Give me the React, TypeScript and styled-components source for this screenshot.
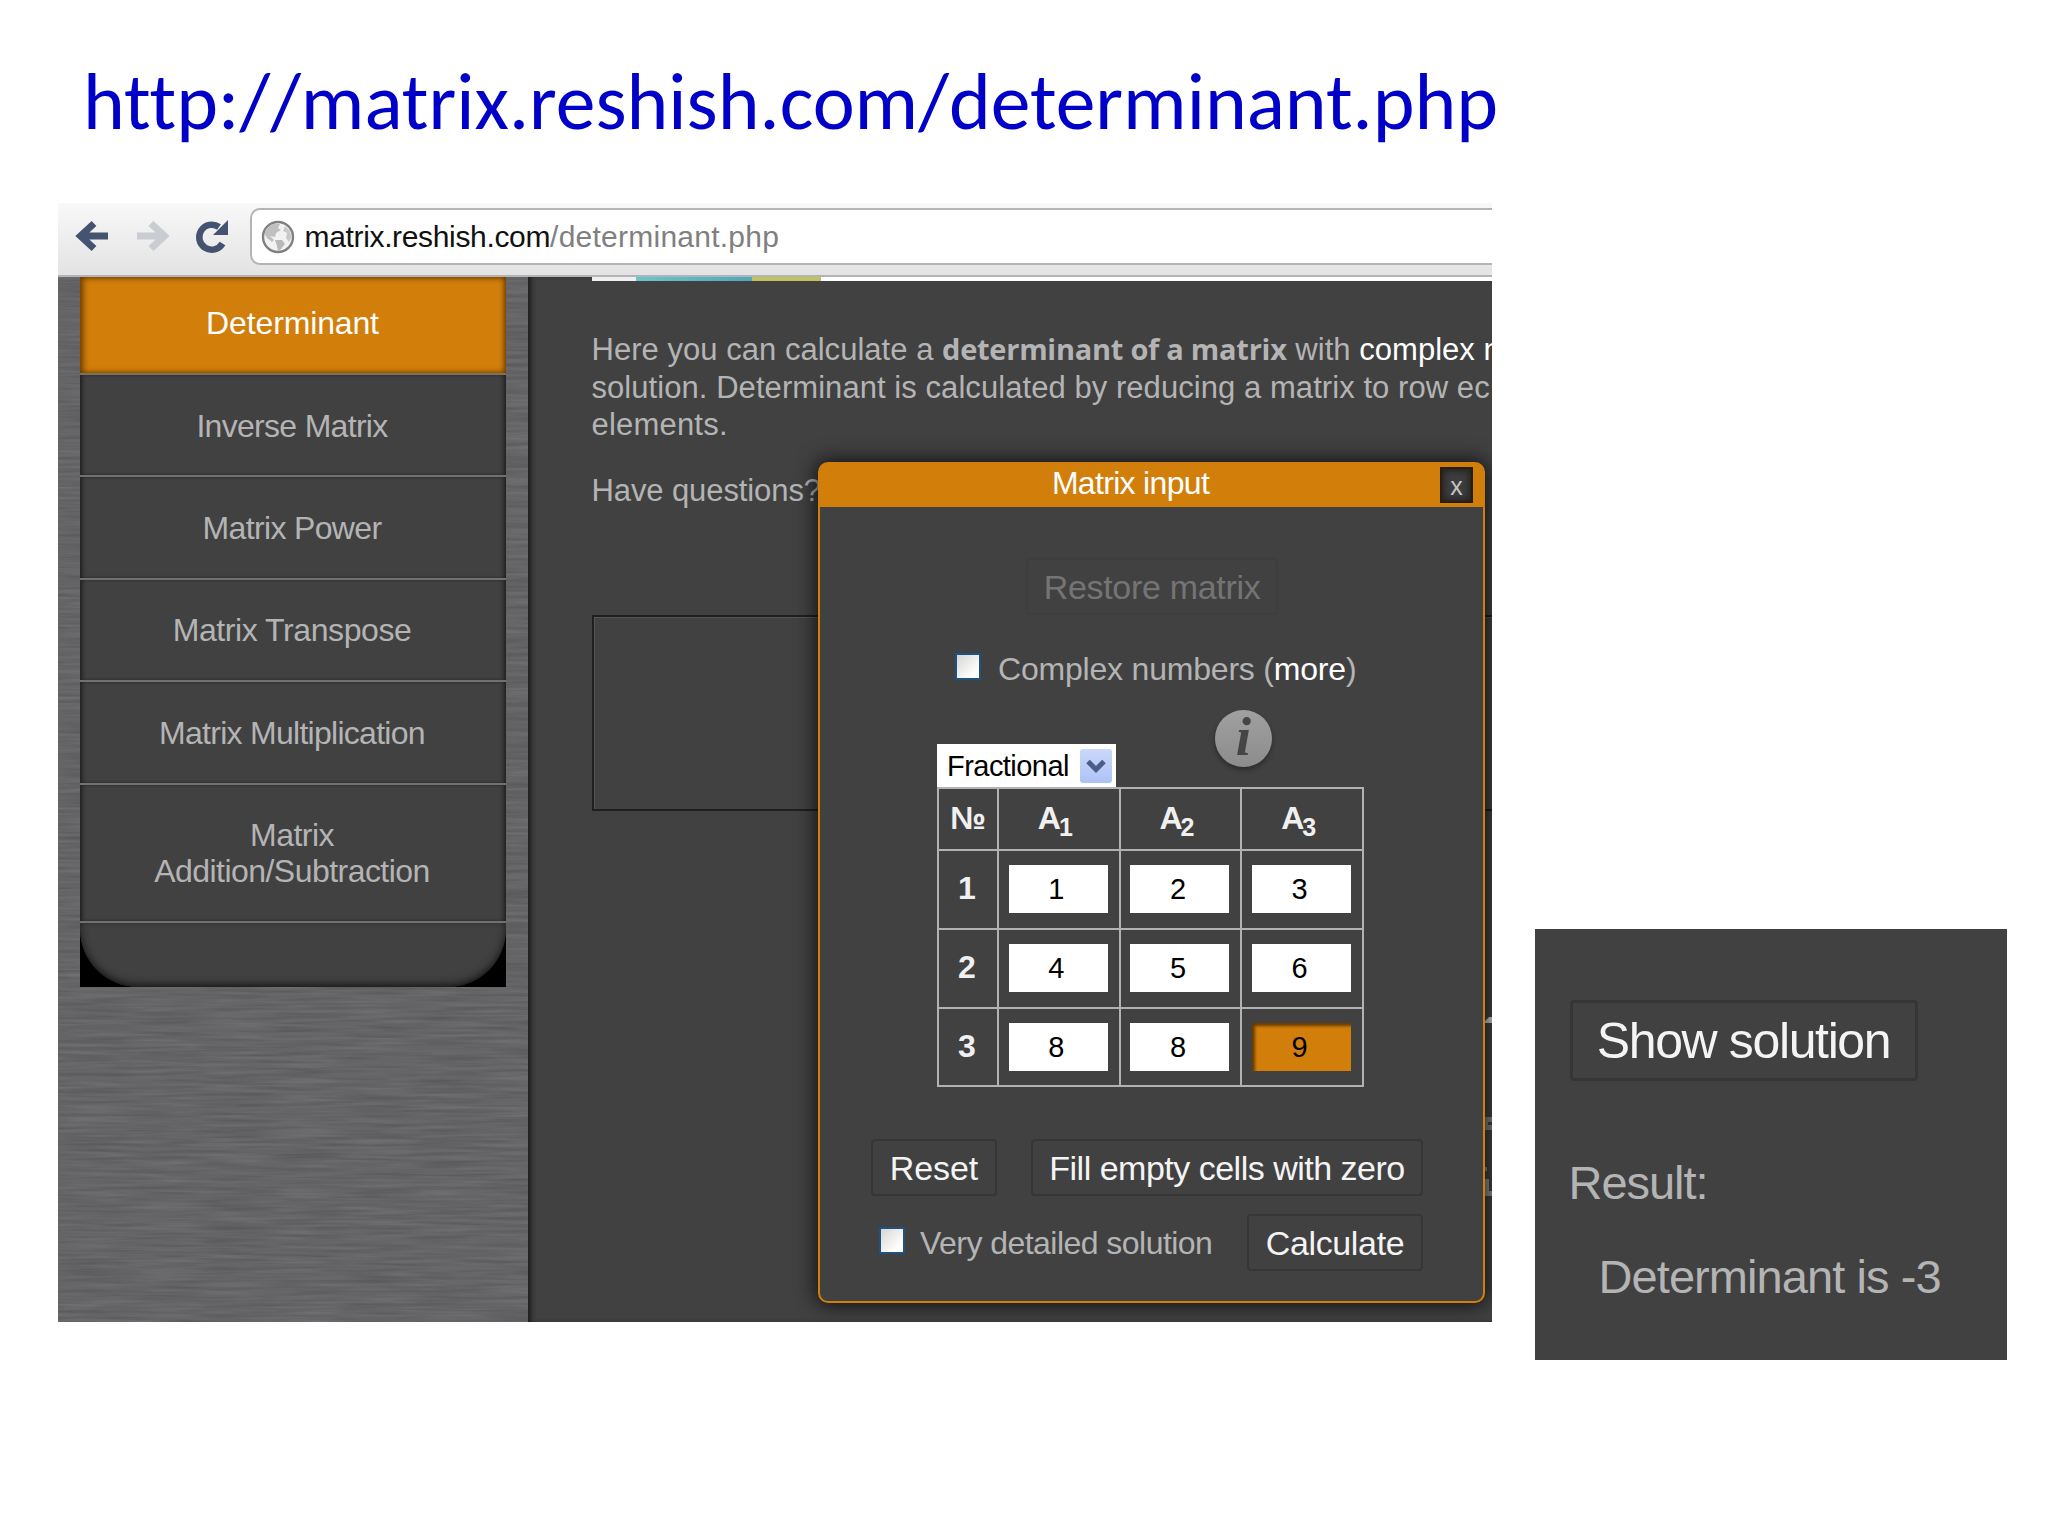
import React from "react";
import styled, { createGlobalStyle, css } from "styled-components";

const sans = '"Liberation Sans", Arial, sans-serif';
const slate = "#414142";
const orange = "#d27e0b";
const grey = "#b4b4b4";

const GlobalStyle = createGlobalStyle`
  *, *::before, *::after { box-sizing: border-box; }
  body { margin: 0; background: #fff; font-family: ${sans}; }
`;

const Slide = styled.div`
  width: 2048px;
  height: 1536px;
  overflow: hidden;
  background: #fff;
`;

const SlideTitle = styled.h1`
  margin: 0;
  height: 203px;
  padding: 53px 0 0 83px;
  font: 400 79.6px/98px Carlito, Calibri, Lato, sans-serif;
  font-variant-ligatures: none;
  color: #0000c8;
  white-space: nowrap;
`;

const Stage = styled.main`
  display: flex;
  align-items: flex-start;
  padding-left: 57.5px;
`;

/* ---------- browser window ---------- */

const Browser = styled.section`
  width: 1434px;
  height: 1119px;
  overflow: hidden;
  background: ${slate};
`;

const Toolbar = styled.div`
  display: flex;
  align-items: flex-start;
  height: 74px;
  padding: 5px 0 0 14px;
  background: linear-gradient(#f8f8f8, #e3e3e4);
  border-bottom: 2px solid #b3b3b8;
`;

const NavIcons = styled.svg`
  width: 178px;
  height: 56px;
`;

const Omnibox = styled.div`
  flex: 1;
  display: flex;
  align-items: center;
  height: 57px;
  padding-left: 9px;
  background: #fff;
  border: 2px solid #b4b4b6;
  border-right: 0;
  border-radius: 10px 0 0 10px;
`;

const Url = styled.span`
  margin-left: 10px;
  font-size: 30px;
  line-height: 36px;
  letter-spacing: -0.34px;
  color: #111;
  white-space: nowrap;
`;

const UrlPath = styled.span`
  letter-spacing: 0.24px;
  color: #808080;
`;

const Viewport = styled.div`
  display: flex;
  height: 1045px;
`;

const Sidebar = styled.nav`
  position: relative;
  width: 470px;
  padding-left: 22px;
  background: #646366;
`;

const Brushed = styled.svg`
  position: absolute;
  inset: 0;
  width: 100%;
  height: 100%;
`;

const Menu = styled.div`
  position: relative;
  width: 426px;
  background: ${slate};
`;

const MenuItem = styled.div<{ $height: number; $active?: boolean; $spacing: number }>`
  display: flex;
  align-items: center;
  justify-content: center;
  height: ${(p) => p.$height}px;
  padding: 1px 1px 0 0;
  border-bottom: 2px solid #717171;
  font-size: 32px;
  line-height: 36px;
  letter-spacing: ${(p) => p.$spacing}px;
  text-align: center;
  color: ${grey};
  box-shadow: inset 4px 0 4px -2px #1c1c1d, inset -4px 0 4px -2px #1c1c1d;
  ${(p) =>
    p.$active &&
    css`
      padding: 0 0 4px;
      color: #fff;
      background: ${orange};
      border-bottom-color: #77735f;
      box-shadow: inset 6px 0 6px -3px #6a3c00, inset -5px 0 5px -3px #6a3c00,
        inset 0 5px 5px -3px #8a5200, inset 0 -5px 4px -3px #a05c00;
    `}
`;

const MenuFoot = styled.div`
  height: 64px;
  background: #000;
  overflow: hidden;
`;

const MenuFootPlate = styled.div`
  height: 64px;
  background: ${slate};
  border-radius: 0 0 58px 58px;
  box-shadow: inset 0 -3px 8px -1px #111;
`;

const Content = styled.div`
  position: relative;
  flex: 1;
  min-width: 0;
  padding-left: 64px;
  background: ${slate};
  box-shadow: inset 5px 0 5px -2px #1c1c1d;
`;

const Banner = styled.div`
  display: flex;
  height: 4px;
  background: #fff;
`;

const BannerPiece = styled.i<{ $width: number; $paint: string }>`
  width: ${(p) => p.$width}px;
  background: ${(p) => p.$paint};
`;

const Paragraph = styled.p<{ $top: number }>`
  margin: ${(p) => p.$top}px 0 0 0;
  font-size: 31px;
  line-height: 37.5px;
  color: ${grey};
`;

const Line = styled.span<{ $spacing?: number }>`
  display: block;
  overflow: hidden;
  white-space: nowrap;
  letter-spacing: ${(p) => p.$spacing ?? 0}px;
`;

const Strong = styled.b`
  font-family: "Open Sans", "Noto Sans", sans-serif;
  font-size: 29px;
  line-height: 30px;
  letter-spacing: -0.26px;
`;

const Bright = styled.span`
  color: #fff;
`;

const Well = styled.div`
  height: 196px;
  margin-top: 106px;
  border: 2px solid #1f1f20;
  border-right: 0;
  box-shadow: inset 1px 1px 0 #555556;
`;

const Peek = styled.svg`
  position: absolute;
  right: 0;
  top: 736px;
  width: 8px;
  height: 190px;
`;

/* ---------- matrix dialog ---------- */

const Dialog = styled.div`
  position: absolute;
  left: 290.5px;
  top: 185px;
  width: 667px;
  height: 841px;
  background: ${slate};
  border: 2px solid ${orange};
  border-radius: 10px;
  box-shadow: 0 0 20px 2px rgba(0, 0, 0, 0.75);
`;

const DialogBar = styled.div`
  display: flex;
  align-items: flex-start;
  height: 43px;
  background: ${orange};
  border-radius: 6px 6px 0 0;
`;

const DialogTitle = styled.div`
  flex: 1;
  padding: 1px 0 0 1px;
  font-size: 32px;
  line-height: 36px;
  letter-spacing: -0.68px;
  text-align: center;
  color: #fff;
`;

const Close = styled.button`
  width: 33px;
  height: 36px;
  margin: 3px 10px 0 0;
  padding: 2px 0 0;
  font: 25px/24px ${sans};
  color: #c4c4c4;
  background: #3d3d3e;
  border: 2px solid #2b1d0c;
  box-shadow: inset 0 0 6px 2px #222;
`;

const DialogBody = styled.div`
  display: flex;
  flex-direction: column;
`;

const Button = styled.button<{
  $width: number;
  $spacing: number;
  $margin?: string;
  $big?: boolean;
  $faded?: boolean;
}>`
  width: ${(p) => p.$width}px;
  height: ${(p) => (p.$big ? 81 : 57)}px;
  margin: ${(p) => p.$margin ?? "0"};
  padding: 0;
  font: ${(p) => (p.$big ? 50 : 34)}px/1 ${sans};
  letter-spacing: ${(p) => p.$spacing}px;
  color: ${(p) => (p.$faded ? "#747475" : "#f4f4f4")};
  background: ${slate};
  border: ${(p) => (p.$big ? 3 : 2)}px solid ${(p) => (p.$faded ? "#3e3e3f" : "#363636")};
  border-radius: 4px;
`;

const CheckRow = styled.label<{ $gap: number; $spacing: number; $margin: string }>`
  display: flex;
  align-items: flex-start;
  gap: ${(p) => p.$gap}px;
  margin: ${(p) => p.$margin};
  font-size: 32px;
  line-height: 36px;
  letter-spacing: ${(p) => p.$spacing}px;
  color: ${grey};
  white-space: nowrap;
`;

const Check = styled.i`
  width: 26px;
  height: 27px;
  margin-top: 2px;
  background: linear-gradient(135deg, #d6d6d2, #fff 80%);
  border: 2px solid #1f5282;
`;

const MatrixHead = styled.div`
  display: flex;
  align-items: flex-end;
  height: 78px;
  margin: 22px 0 0 117px;
`;

const Select = styled.div`
  display: flex;
  align-items: center;
  justify-content: space-between;
  width: 179px;
  height: 43px;
  padding: 1px 4px 0 10px;
  font-size: 29px;
  letter-spacing: -0.54px;
  color: #000;
  background: #fff;
`;

const SelectArrow = styled.svg`
  width: 32px;
  height: 34px;
`;

const Info = styled.div`
  align-self: flex-start;
  width: 57px;
  height: 57px;
  margin: 1px 0 0 99px;
  border-radius: 50%;
  background: linear-gradient(#a0a0a0, #8c8c8c);
  box-shadow: 0 3px 5px rgba(0, 0, 0, 0.35);
  font: italic bold 55px/53px "Liberation Serif", serif;
  text-align: center;
  color: #454546;
`;

const Grid = styled.div`
  display: grid;
  grid-template-columns: 58px repeat(3, 119.67px);
  grid-template-rows: 60px 77px 77px 76px;
  gap: 2px;
  width: 427px;
  padding: 2px;
  margin-left: 117px;
  background: #b2b2b2;
`;

const HeadCell = styled.div<{ $shift?: number }>`
  display: flex;
  align-items: center;
  justify-content: center;
  padding: 0 ${(p) => p.$shift ?? 0}px 2px 0;
  font-size: 32px;
  font-weight: 700;
  color: #f0f0f0;
  background: ${slate};
`;

const Sub = styled.sub`
  align-self: center;
  margin: 18px 0 0 -2px;
  font-size: 25px;
  line-height: 25px;
`;

const Cell = styled.div`
  display: flex;
  align-items: center;
  justify-content: center;
  padding: 0 1px 1px 0;
  background: ${slate};
`;

const Field = styled.div<{ $focused?: boolean }>`
  width: 99px;
  height: 48px;
  padding-right: 4px;
  font-size: 29px;
  line-height: 48px;
  text-align: center;
  color: #000;
  background: #fff;
  ${(p) =>
    p.$focused &&
    css`
      background: ${orange};
      box-shadow: inset 4px 4px 3px -1px #6a3d00;
    `}
`;

const Actions = styled.div`
  display: flex;
  flex-direction: column;
  gap: 18px;
  width: 552px;
  margin: 52px 0 0 51px;
`;

const ActionRow = styled.div`
  display: flex;
  justify-content: space-between;
`;

/* ---------- result clipping ---------- */

const Result = styled.aside`
  width: 472px;
  height: 431px;
  margin: 726px 0 0 43px;
  padding: 71px 0 0 35px;
  background: ${slate};
`;

const ResultLine = styled.div<{ $top: number; $left: number; $spacing: number }>`
  margin: ${(p) => p.$top}px 0 0 ${(p) => p.$left}px;
  font-size: 47px;
  line-height: 54px;
  letter-spacing: ${(p) => p.$spacing}px;
  color: ${grey};
  white-space: nowrap;
`;

const menu = [
  { label: "Determinant", height: 98, spacing: -0.14, active: true },
  { label: "Inverse Matrix", height: 102.4, spacing: -0.7 },
  { label: "Matrix Power", height: 102.4, spacing: -0.65 },
  { label: "Matrix Transpose", height: 102.4, spacing: -0.42 },
  { label: "Matrix Multiplication", height: 102.4, spacing: -0.72 },
  { label: "Matrix\nAddition/Subtraction", height: 138.3, spacing: -0.54 },
];

const MenuLabel = styled.span`
  white-space: pre;
`;

const rows = [
  [1, 2, 3],
  [4, 5, 6],
  [8, 8, 9],
];

const Globe = () => (
  <svg width="34" height="34" viewBox="0 0 34 34">
    <circle cx="17" cy="17" r="15" fill="#f2f2f2" stroke="#808080" strokeWidth="2.4" />
    <path d="M5 9 L11 4 L19 4 L17 8 L20 10 L15 13 L14 17 L9 16 L13 20 L11 22 L6 18 L3.5 14 Z" fill="#c0c0c0" />
    <path d="M14 20 L21 20 L24 24 L20 29 L17 31 L16 26 Z" fill="#b9b9b9" />
    <path d="M24 6 L29 11 L30.5 17 L28 22 L25 18 L26 13 L22 11 Z" fill="#c9c9c9" />
  </svg>
);

export default function App() {
  return (
    <Slide>
      <GlobalStyle />
      <SlideTitle>http://matrix.reshish.com/determinant.php</SlideTitle>
      <Stage>
        <Browser>
          <Toolbar>
            <NavIcons viewBox="72 208 178 56" fill="none">
              <path d="M108 236H82M94 223.5L80.500 236L94 248.500" stroke="#44536f" strokeWidth="7" />
              <path d="M137 236H163M151 223.500L164.500 236L151 248.500" stroke="#c9ccd1" strokeWidth="7" />
              <path d="M222.500 243.500A12.500 12.500 0 1 1 219 227" stroke="#44536f" strokeWidth="6.500" />
              <path d="M228 220V235H213Z" fill="#44536f" />
            </NavIcons>
            <Omnibox>
              <Globe />
              <Url>
                matrix.reshish.com<UrlPath>/determinant.php</UrlPath>
              </Url>
            </Omnibox>
          </Toolbar>
          <Viewport>
            <Sidebar>
              <Brushed>
                <filter id="brush" x="0" y="0" width="100%" height="100%" colorInterpolationFilters="sRGB">
                  <feTurbulence type="fractalNoise" baseFrequency="0.014 0.3" numOctaves="3" seed="4" />
                  <feColorMatrix values="0.12 0 0 0 0.334  0.12 0 0 0 0.331  0.12 0 0 0 0.342  0 0 0 0 1" />
                </filter>
                <rect width="100%" height="100%" filter="url(#brush)" />
              </Brushed>
              <Menu>
                {menu.map((m) => (
                  <MenuItem key={m.label} $height={m.height} $active={m.active} $spacing={m.spacing}>
                    <MenuLabel>{m.label}</MenuLabel>
                  </MenuItem>
                ))}
                <MenuFoot>
                  <MenuFootPlate />
                </MenuFoot>
              </Menu>
            </Sidebar>
            <Content>
              <Banner>
                <BannerPiece $width={44} $paint="#efefef" />
                <BannerPiece $width={116} $paint="linear-gradient(90deg, #68c6cb, #4fa9b8)" />
                <BannerPiece $width={69} $paint="#bfc25f" />
              </Banner>
              <Paragraph $top={50}>
                <Line $spacing={0.03}>
                  Here you can calculate a <Strong>determinant of a matrix</Strong> with <Bright>complex n</Bright>
                </Line>
                <Line $spacing={0.06}>solution. Determinant is calculated by reducing a matrix to row ec</Line>
                <Line $spacing={0.2}>elements.</Line>
              </Paragraph>
              <Paragraph $top={28}>
                <Line $spacing={-0.1}>Have questions?</Line>
              </Paragraph>
              <Well />
              <Peek viewBox="0 0 8 190">
                <path d="M1 8L5 4H8V10H1Z" fill="#c9c9c9" />
                <path d="M0 104H8V109H4V112H8V117H0Z" fill="#7d7d7d" />
                <path d="M0 154H3V158H0ZM0 166H5V178H8V183H0Z" fill="#8a8a8a" />
              </Peek>
              <Dialog>
                <DialogBar>
                  <DialogTitle>Matrix input</DialogTitle>
                  <Close>x</Close>
                </DialogBar>
                <DialogBody>
                  <Button $width={252} $spacing={-0.31} $faded $margin="51px 0 0 206px">
                    Restore matrix
                  </Button>
                  <CheckRow $gap={17} $spacing={-0.2} $margin="36px 0 0 135px">
                    <Check />
                    <span>
                      Complex numbers (<Bright>more</Bright>)
                    </span>
                  </CheckRow>
                  <MatrixHead>
                    <Select>
                      Fractional
                      <SelectArrow viewBox="0 0 32 34">
                        <defs>
                          <linearGradient id="sel" x1="0" y1="0" x2="0" y2="1">
                            <stop offset="0" stopColor="#cbd8fb" />
                            <stop offset="1" stopColor="#aec2f6" />
                          </linearGradient>
                        </defs>
                        <rect width="32" height="34" rx="3" fill="url(#sel)" />
                        <path d="M8 12.500L16 20.500L24 12.500" fill="none" stroke="#4a5f88" strokeWidth="5" />
                      </SelectArrow>
                    </Select>
                    <Info>i</Info>
                  </MatrixHead>
                  <Grid>
                    <HeadCell>№</HeadCell>
                    {[1, 2, 3].map((n) => (
                      <HeadCell key={n} $shift={7}>
                        A<Sub>{n}</Sub>
                      </HeadCell>
                    ))}
                    {rows.map((row, r) => (
                      <React.Fragment key={r}>
                        <HeadCell $shift={2}>{r + 1}</HeadCell>
                        {row.map((v, c) => (
                          <Cell key={c}>
                            <Field $focused={r === 2 && c === 2}>{v}</Field>
                          </Cell>
                        ))}
                      </React.Fragment>
                    ))}
                  </Grid>
                  <Actions>
                    <ActionRow>
                      <Button $width={126} $spacing={-0.09}>Reset</Button>
                      <Button $width={392} $spacing={-0.5}>Fill empty cells with zero</Button>
                    </ActionRow>
                    <ActionRow>
                      <CheckRow $gap={15} $spacing={-0.54} $margin="11px 0 0 8px">
                        <Check />
                        <span>Very detailed solution</span>
                      </CheckRow>
                      <Button $width={176} $spacing={-0.35}>Calculate</Button>
                    </ActionRow>
                  </Actions>
                </DialogBody>
              </Dialog>
            </Content>
          </Viewport>
        </Browser>
        <Result>
          <Button $width={348} $spacing={-1.37} $big>Show solution</Button>
          <ResultLine $top={75} $left={-1} $spacing={-1.04}>Result:</ResultLine>
          <ResultLine $top={40} $left={29} $spacing={-0.92}>Determinant is -3</ResultLine>
        </Result>
      </Stage>
    </Slide>
  );
}
